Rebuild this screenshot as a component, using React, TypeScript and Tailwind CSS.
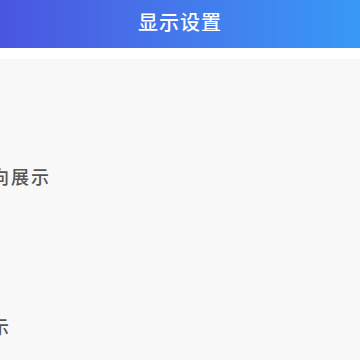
export default function App() {
  const items = [
    { label: "横向展示", top: "mt-[105px]" },
    { label: "展示", top: "mt-[126px]" },
  ];

  return (
    <div className="w-[360px] h-[360px] overflow-hidden bg-[#f8f8f8] font-['Noto_Sans_CJK_SC','Noto_Sans',sans-serif]">
      <header className="h-12 pb-1 flex items-center justify-center bg-gradient-to-r from-[#4a55e0] to-[#3799f6] shadow-[0_2px_3px_rgba(90,130,240,0.45)]">
        <h1 className="text-white text-[20px] font-medium leading-none tracking-[1px]">显示设置</h1>
      </header>
      <div className="h-[11px] bg-white" />
      <div className="flex flex-col">
        {items.map((item) => (
          <div
            key={item.label}
            className={`${item.top} -ml-[29px] h-6 flex items-center whitespace-nowrap text-[18px] font-medium tracking-[2px] leading-none text-[#555555]`}
          >
            {item.label}
          </div>
        ))}
      </div>
    </div>
  );
}
